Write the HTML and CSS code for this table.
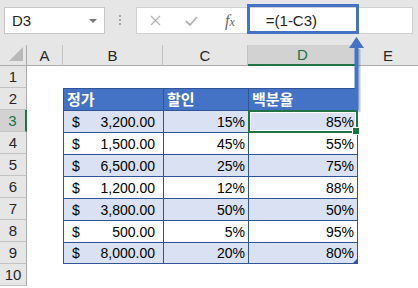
FILE: index.html
```html
<!DOCTYPE html>
<html lang="ko">
<head>
  <meta charset="UTF-8" />
  <meta name="viewport" content="width=device-width, initial-scale=1">
  <title>백분율 계산</title>
  <link rel="stylesheet" href="styles.css">
</head>
<body>
  <div class="app">
    <!-- name box + formula bar -->
    <div class="toolbar">
      <div class="name-box">
        <span>D3</span>
        <span class="caret"></span>
      </div>
      <div class="grip">
        <svg width="3" height="11" viewBox="0 0 3 11"><rect x="0" y="0" width="2" height="2" fill="#a6a6a6"/><rect x="0" y="4" width="2" height="2" fill="#a6a6a6"/><rect x="0" y="8" width="2" height="2" fill="#a6a6a6"/></svg>
      </div>
      <div class="formula-bar">
        <span class="fb-icon cancel">
          <svg width="11" height="11" viewBox="0 0 11 11"><path d="M1 1 L10 10 M10 1 L1 10" stroke="#b3b3b3" stroke-width="1.3" fill="none"/></svg>
        </span>
        <span class="fb-icon enter">
          <svg width="13" height="10" viewBox="0 0 13 10"><path d="M1 5 L5 9 L12 1" stroke="#b3b3b3" stroke-width="1.8" fill="none"/></svg>
        </span>
        <span class="fx">f<small>x</small></span>
        <span class="formula">=(1-C3)</span>
      </div>
    </div>

    <!-- worksheet -->
    <div class="sheet">
      <div class="corner">
        <svg width="14" height="14" viewBox="0 0 14 14"><path d="M14 0 L14 14 L0 14 Z" fill="#b9b9b9"/></svg>
      </div>
      <div class="col-head">A</div>
      <div class="col-head">B</div>
      <div class="col-head">C</div>
      <div class="col-head active">D</div>
      <div class="col-head last">E</div>

      <div class="row-head">1</div>
      <div class="cell"></div><div class="cell"></div><div class="cell"></div><div class="cell"></div><div class="cell"></div>

      <div class="row-head">2</div>
      <div class="cell"></div>
      <div class="tc th">정가</div>
      <div class="tc th">할인</div>
      <div class="tc th end">백분율</div>
      <div class="cell"></div>

      <div class="row-head active">3</div>
      <div class="cell"></div>
      <div class="tc band money"><span>$</span><span>3,200.00</span></div>
      <div class="tc band pct">15%</div>
      <div class="tc band pct end selected">85%<span class="handle"></span></div>
      <div class="cell"></div>

      <div class="row-head">4</div>
      <div class="cell"></div>
      <div class="tc money"><span>$</span><span>1,500.00</span></div>
      <div class="tc pct">45%</div>
      <div class="tc pct end">55%</div>
      <div class="cell"></div>

      <div class="row-head">5</div>
      <div class="cell"></div>
      <div class="tc band money"><span>$</span><span>6,500.00</span></div>
      <div class="tc band pct">25%</div>
      <div class="tc band pct end">75%</div>
      <div class="cell"></div>

      <div class="row-head">6</div>
      <div class="cell"></div>
      <div class="tc money"><span>$</span><span>1,200.00</span></div>
      <div class="tc pct">12%</div>
      <div class="tc pct end">88%</div>
      <div class="cell"></div>

      <div class="row-head">7</div>
      <div class="cell"></div>
      <div class="tc band money"><span>$</span><span>3,800.00</span></div>
      <div class="tc band pct">50%</div>
      <div class="tc band pct end">50%</div>
      <div class="cell"></div>

      <div class="row-head">8</div>
      <div class="cell"></div>
      <div class="tc money"><span>$</span><span>500.00</span></div>
      <div class="tc pct">5%</div>
      <div class="tc pct end">95%</div>
      <div class="cell"></div>

      <div class="row-head">9</div>
      <div class="cell"></div>
      <div class="tc band money bottom"><span>$</span><span>8,000.00</span></div>
      <div class="tc band pct bottom">20%</div>
      <div class="tc band pct end bottom">80%<span class="resize"></span></div>
      <div class="cell"></div>

      <div class="row-head">10</div>
      <div class="cell"></div><div class="cell"></div><div class="cell"></div><div class="cell"></div><div class="cell"></div>
    </div>

    <!-- annotation: highlight box + arrow -->
    <div class="callout"></div>
    <svg class="arrow" width="17" height="76" viewBox="0 0 17 76">
      <path d="M10 12 L10 75" stroke="#3a5f9f" stroke-opacity="0.35" stroke-width="5"/>
      <path d="M8.5 10 L8.5 73" stroke="#4472c4" stroke-width="4"/>
      <path d="M8.5 0 L16 11 L1 11 Z" fill="#4472c4"/>
    </svg>
  </div>
</body>
</html>
```

FILE: styles.css
```css
/* Excel-like sheet: name box, formula bar, grid */
body {
  margin: 0;
  background: #fff;
  font-family: "Liberation Sans", Arial, sans-serif;
  color: #000;
}
.app {
  position: relative;
  width: 418px;
  height: 288px;
  overflow: hidden;
}
.toolbar {
  display: flex;
  align-items: flex-start;
  height: 45px;
  padding-top: 7px;
  box-sizing: border-box;
  background: #e6e6e6;
}
.name-box {
  display: flex;
  align-items: center;
  justify-content: space-between;
  width: 101px;
  height: 27px;
  margin-left: 4px;
  padding: 0 7px 0 7px;
  box-sizing: border-box;
  background: #fff;
  border: 1px solid #c6c6c6;
  font-size: 15px;
  color: #222;
}
.caret {
  width: 0;
  height: 0;
  border-left: 4px solid transparent;
  border-right: 4px solid transparent;
  border-top: 4px solid #7a7a7a;
  margin-top: 1px;
}
.grip {
  width: 31px;
  height: 27px;
  display: flex;
  align-items: center;
  justify-content: center;
}
.formula-bar {
  display: flex;
  align-items: center;
  width: 277px;
  height: 27px;
  box-sizing: border-box;
  background: #fff;
  border: 1px solid #d0d0d0;
}
.fb-icon {
  display: flex;
  align-items: center;
  justify-content: center;
}
.cancel {
  width: 11px;
  margin-left: 13px;
}
.enter {
  width: 13px;
  margin-left: 24px;
}
.fx {
  margin-left: 27px;
  font-family: "Liberation Serif", "Times New Roman", serif;
  font-style: italic;
  font-size: 16px;
  color: #666;
  line-height: 1;
}
.fx small {
  font-size: 12px;
}
.formula {
  margin-left: 31px;
  font-size: 15px;
  color: #222;
}

.sheet {
  display: grid;
  grid-template-columns: 27px 36px 100px 85px 110px 60px;
  grid-template-rows: 21px repeat(10, 22px);
}
.corner {
  display: flex;
  align-items: flex-end;
  justify-content: flex-end;
  padding: 0 3px 4px 0;
  box-sizing: border-box;
  background: #e6e6e6;
  border-right: 1px solid #ababab;
  border-bottom: 1px solid #ababab;
}
.col-head {
  display: flex;
  align-items: center;
  justify-content: center;
  box-sizing: border-box;
  background: #e6e6e6;
  border-right: 1px solid #c3c3c3;
  border-bottom: 1px solid #ababab;
  font-size: 15px;
  color: #262626;
}
.col-head.last {
  border-right: none;
}
.col-head.active {
  background: #d2d2d2;
  border-bottom: 2px solid #217346;
  color: #217346;
}
.row-head {
  display: flex;
  align-items: center;
  justify-content: center;
  box-sizing: border-box;
  background: #e6e6e6;
  border-right: 1px solid #ababab;
  border-bottom: 1px solid #c3c3c3;
  font-size: 15px;
  color: #262626;
}
.row-head.active {
  background: #d2d2d2;
  border-right: 2px solid #217346;
  color: #217346;
}
.cell {
  background: #fff;
}

/* table B2:D9 */
.tc {
  display: flex;
  align-items: flex-end;
  box-sizing: border-box;
  border-left: 1px solid #2f5597;
  border-top: 1px solid #2f5597;
  padding: 0 4px 2px 4px;
  font-size: 14px;
  line-height: 16px;
  background: #fff;
}
.tc.end {
  border-right: 1px solid #2f5597;
}
.tc.bottom {
  border-bottom: 1px solid #2f5597;
}
.tc.band {
  background: #d9e1f2;
}
.th {
  align-items: center;
  padding: 0 3px 1px 3px;
  background: #4472c4;
  color: #fff;
  font-family: "Noto Sans CJK KR", "Noto Sans", sans-serif;
  font-weight: 700;
  font-size: 15px;
}
.money {
  justify-content: space-between;
  padding-left: 8px;
  padding-right: 8px;
}
.pct {
  justify-content: flex-end;
  padding-right: 3px;
}
.selected {
  position: relative;
}
.selected::after {
  content: "";
  position: absolute;
  left: -1px;
  top: -1px;
  right: -1px;
  bottom: -1px;
  border: 2px solid #217346;
  box-shadow: inset 0 0 0 1px #fff;
}
.handle {
  position: absolute;
  right: -3px;
  bottom: -3px;
  width: 6px;
  height: 6px;
  background: #217346;
  border: 1px solid #fff;
  z-index: 2;
}
.end.bottom {
  position: relative;
}
.resize {
  position: absolute;
  right: 0;
  bottom: 0;
  width: 0;
  height: 0;
  border-left: 4px solid transparent;
  border-bottom: 4px solid #2f5597;
}

/* annotation overlay */
.callout {
  position: absolute;
  left: 247px;
  top: 4px;
  width: 112px;
  height: 30px;
  box-sizing: border-box;
  border: 3px solid #4472c4;
}
.arrow {
  position: absolute;
  left: 348px;
  top: 37px;
}
```
